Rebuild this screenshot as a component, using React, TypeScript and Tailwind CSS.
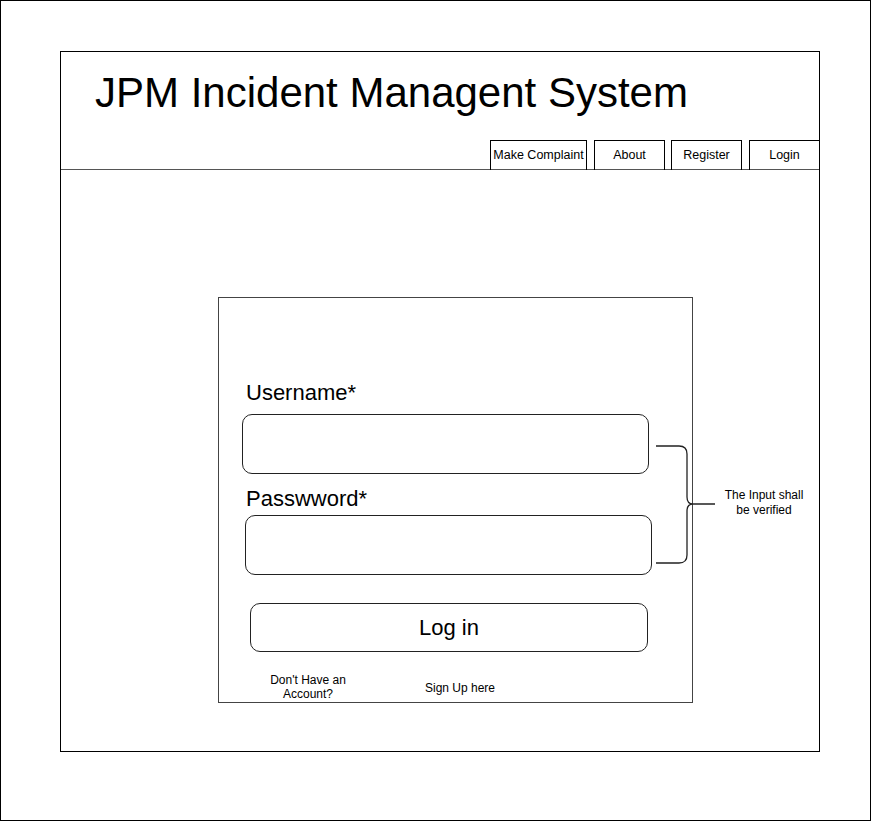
export default function App() {
  const navItems = [
    { label: "Make Complaint", cls: "w-[97px]" },
    { label: "About", cls: "w-[71px] ml-[7px]" },
    { label: "Register", cls: "w-[71px] ml-[6px]" },
    { label: "Login", cls: "w-[71px] ml-[7px]" },
  ];

  return (
    <div className="w-[871px] h-[821px] border border-black bg-white font-['Liberation_Sans',Arial,sans-serif] text-black">
      {/* page frame */}
      <div className="relative ml-[59px] mt-[50px] w-[760px] h-[701px] border border-black">
        {/* header */}
        <div className="h-[118px] border-b border-[#555] flex flex-col">
          <h1 className="pl-[34px] pt-[17px] text-[42px] leading-[48px] font-normal">
            JPM Incident Managent System
          </h1>
          <nav className="mt-auto flex justify-end -mr-px translate-y-px">
            {navItems.map((item) => (
              <div
                key={item.label}
                className={`${item.cls} h-[30px] border border-black border-b-0 flex items-center justify-center text-[12.5px]`}
              >
                {item.label}
              </div>
            ))}
          </nav>
        </div>

        {/* login card */}
        <div className="ml-[157px] mt-[127px] w-[475px] h-[406px] border border-[#444]">
          <div className="ml-[27px] mt-[82px] text-[22px] leading-[26px]">Username*</div>
          <div className="ml-[23px] mt-[8px] w-[407px] h-[60px] border border-[#222] rounded-[10px]" />
          <div className="ml-[27px] mt-[12px] text-[22px] leading-[26px]">Passwword*</div>
          <div className="ml-[26px] mt-[3px] w-[407px] h-[60px] border border-[#222] rounded-[10px]" />
          <button className="ml-[31px] mt-[28px] w-[398px] h-[49px] border border-[#222] rounded-[10px] text-[22px] flex items-center justify-center">
            Log in
          </button>
          <div className="mt-[21px] flex items-center text-[12px] leading-[14px]">
            <div className="ml-[45px] w-[88px] text-center">
              Don't Have an
              <br />
              Account?
            </div>
            <div className="ml-[73px] pt-[2px]">Sign Up here</div>
          </div>
        </div>

        {/* annotation brace */}
        <svg
          className="absolute left-[594px] top-[393px]"
          width="64"
          height="120"
          viewBox="0 0 64 120"
          fill="none"
        >
          <path
            d="M1 1 H24 Q32 1 32 9 V52 Q32 59 38 59 H60 M38 59 Q32 59 32 66 V110 Q32 118 24 118 H1"
            stroke="#222"
            strokeWidth="1.3"
          />
        </svg>
        <div className="absolute left-[653px] top-[436px] w-[100px] text-center text-[12px] leading-[15px]">
          The Input shall
          <br />
          be verified
        </div>
      </div>
    </div>
  );
}
